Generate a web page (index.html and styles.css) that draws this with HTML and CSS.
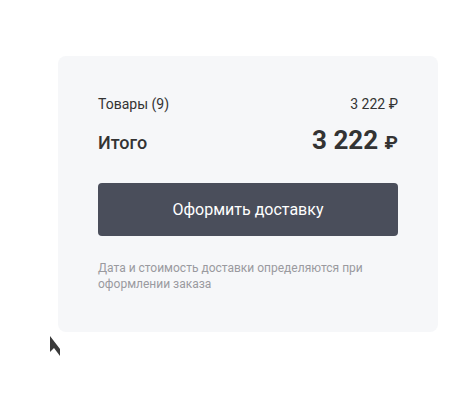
FILE: index.html
```html
<!DOCTYPE html>
<html lang="ru">
<head>
    <meta charset="UTF-8">
    <title>Корзина</title>
    <link rel="stylesheet" href="styles.css">
</head>
<body>
    <div class="summary">
        <div class="row row-items">
            <span>Товары (9)</span>
            <span>3 222 ₽</span>
        </div>
        <div class="row row-total">
            <span class="total-label">Итого</span>
            <span class="total-sum">3 222 <span class="rub">₽</span></span>
        </div>
        <button class="checkout">Оформить доставку</button>
        <p class="note">Дата и стоимость доставки определяются при оформлении заказа</p>
    </div>

    <svg class="cursor" width="12" height="22" viewBox="0 0 12 22">
        <path d="M1 1 L1 17 L5 13 L11 21 L11 20 L11 14 Z" fill="#3a3a3a"/>
    </svg>
</body>
</html>
```

FILE: styles.css
```css
body {
    margin: 0;
    font-family: Roboto, "Liberation Sans", sans-serif;
    background: #fff;
    color: #333;
}
.summary {
    margin: 56px 0 0 58px;
    width: 380px;
    box-sizing: border-box;
    padding: 38px 40px 40px;
    background: #f6f7f9;
    border-radius: 8px;
}
.row {
    display: flex;
    justify-content: space-between;
    align-items: baseline;
}
.row-items {
    font-size: 14px;
    line-height: 20px;
}
.row-total {
    margin-top: 10px;
    line-height: 32px;
}
.total-label {
    font-size: 18px;
    font-weight: 500;
}
.total-sum {
    font-size: 26px;
    font-weight: 700;
}
.rub {
    font-size: 19px;
}
.checkout {
    display: block;
    width: 100%;
    height: 53px;
    margin-top: 24px;
    border: 0;
    border-radius: 4px;
    background: #4a4e5b;
    color: #fff;
    font-family: inherit;
    font-size: 16px;
}
.note {
    margin: 24px 0 0;
    font-size: 12px;
    line-height: 16px;
    color: #9a9a9f;
}
.cursor {
    position: absolute;
    left: 49px;
    top: 335px;
}
```
